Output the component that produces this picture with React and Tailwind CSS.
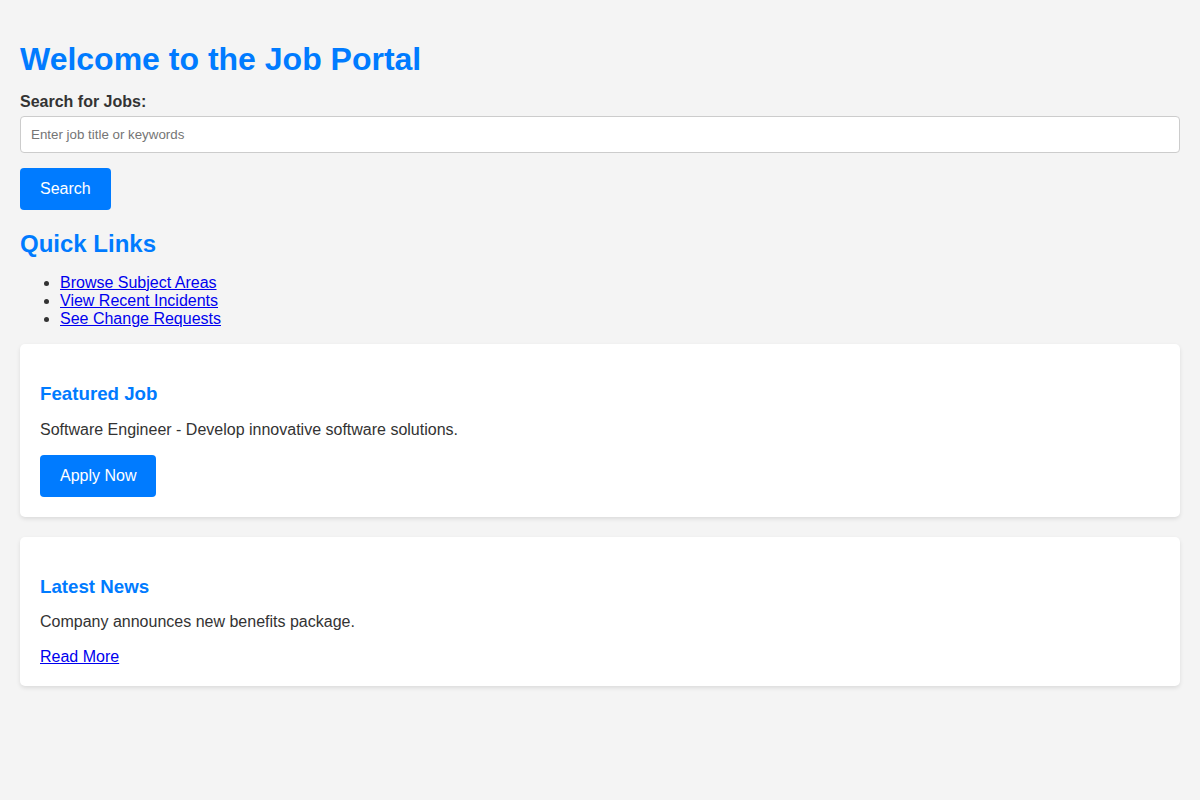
import React from 'react';

const Card = ({ title, children }) => (
  <div className="bg-white rounded-[5px] shadow-[0_2px_4px_rgba(0,0,0,0.1)] px-5 pt-[38.72px] pb-5 mb-5">
    <h3 className="text-[18.72px] leading-[21.5px] font-bold text-[#007bff] mb-4">{title}</h3>
    {children}
  </div>
);

const App = () => {
  const [query, setQuery] = React.useState('');

  return (
    <div className="min-h-[800px] bg-[#f4f4f4] text-[#333] p-5 font-['Liberation_Sans',Arial,sans-serif] text-[16px] leading-[18.4px]">
      <h1 className="text-[32px] leading-[37px] font-bold text-[#007bff] mt-[21px] mb-[14.6px]">
        Welcome to the Job Portal
      </h1>

      <label htmlFor="search" className="block font-bold mb-[5px]">
        Search for Jobs:
      </label>
      <input
        id="search"
        type="text"
        value={query}
        onChange={(e) => setQuery(e.target.value)}
        placeholder="Enter job title or keywords"
        className="block w-full h-[37px] px-[10px] text-[13.333px] bg-white border border-[#ccc] rounded-[4px] placeholder:text-[#757575] outline-none"
      />
      <button className="mt-[15px] h-[42px] px-5 bg-[#007bff] text-white rounded-[4px] text-[16px]">
        Search
      </button>

      <h2 className="text-[24px] leading-[27.6px] font-bold text-[#007bff] mt-5 mb-4">Quick Links</h2>
      <ul className="list-disc pl-10 mb-[15.5px]">
        <li><a href="#" className="text-[#0000ee] underline">Browse Subject Areas</a></li>
        <li><a href="#" className="text-[#0000ee] underline">View Recent Incidents</a></li>
        <li><a href="#" className="text-[#0000ee] underline">See Change Requests</a></li>
      </ul>

      <Card title="Featured Job">
        <p className="mb-4">Software Engineer - Develop innovative software solutions.</p>
        <button className="h-[42px] px-5 bg-[#007bff] text-white rounded-[4px] text-[16px]">
          Apply Now
        </button>
      </Card>

      <Card title="Latest News">
        <p className="mb-4">Company announces new benefits package.</p>
        <a href="#" className="text-[#0000ee] underline">Read More</a>
      </Card>
    </div>
  );
};

export default App;
